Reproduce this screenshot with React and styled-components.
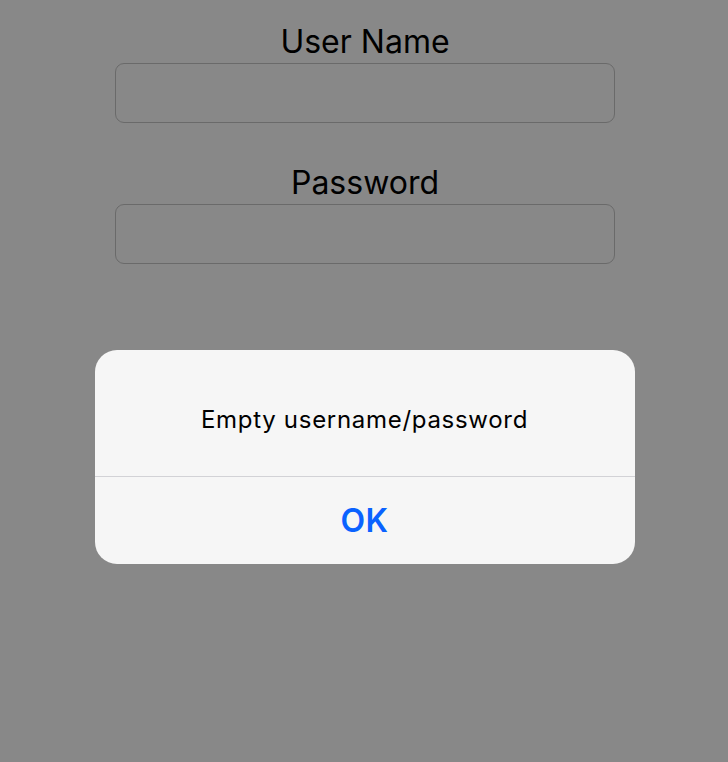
import React from "react";
import styled, { createGlobalStyle } from "styled-components";

const GlobalStyle = createGlobalStyle`
  html, body {
    margin: 0;
    padding: 0;
    background: #888888;
  }
  body {
    font-family: Inter, "Liberation Sans", sans-serif;
  }
`;

const Screen = styled.div`
  position: relative;
  width: 100%;
  height: 762px;
  background: #888888;
  overflow: hidden;
`;

const Form = styled.div`
  width: 500px;
  margin-left: calc(50% - 249px);
  padding-top: 23px;
  display: flex;
  flex-direction: column;
`;

const Field = styled.div`
  display: flex;
  flex-direction: column;
  align-items: center;
  margin-bottom: ${(p) => p.gap || 0}px;
`;

const Label = styled.div`
  font-size: 32px;
  line-height: 38px;
  color: #000;
  margin-bottom: 2px;
`;

const Input = styled.div`
  box-sizing: border-box;
  width: 500px;
  height: 60px;
  border: 1px solid #6a6a6a;
  border-radius: 9px;
`;

const Dialog = styled.div`
  position: absolute;
  top: 350px;
  left: 50%;
  transform: translateX(-50%);
  margin-left: 0.5px;
  width: 540px;
  background: #f6f6f6;
  border-radius: 22px;
  overflow: hidden;
  display: flex;
  flex-direction: column;
`;

const Message = styled.div`
  box-sizing: border-box;
  height: 127px;
  padding-top: 12px;
  display: flex;
  align-items: center;
  justify-content: center;
  font-size: 24px;
  letter-spacing: 0.7px;
  color: #000;
  border-bottom: 1px solid #d2d2d6;
`;

const Button = styled.div`
  height: 87px;
  display: flex;
  align-items: center;
  justify-content: center;
  font-size: 32px;
  font-weight: 600;
  letter-spacing: 0.5px;
  color: #0a62ff;
`;

export default function App() {
  return (
    <Screen>
      <GlobalStyle />
      <Form>
        <Field gap={41}>
          <Label>User Name</Label>
          <Input />
        </Field>
        <Field>
          <Label>Password</Label>
          <Input />
        </Field>
      </Form>
      <Dialog>
        <Message>Empty username/password</Message>
        <Button>OK</Button>
      </Dialog>
    </Screen>
  );
}
